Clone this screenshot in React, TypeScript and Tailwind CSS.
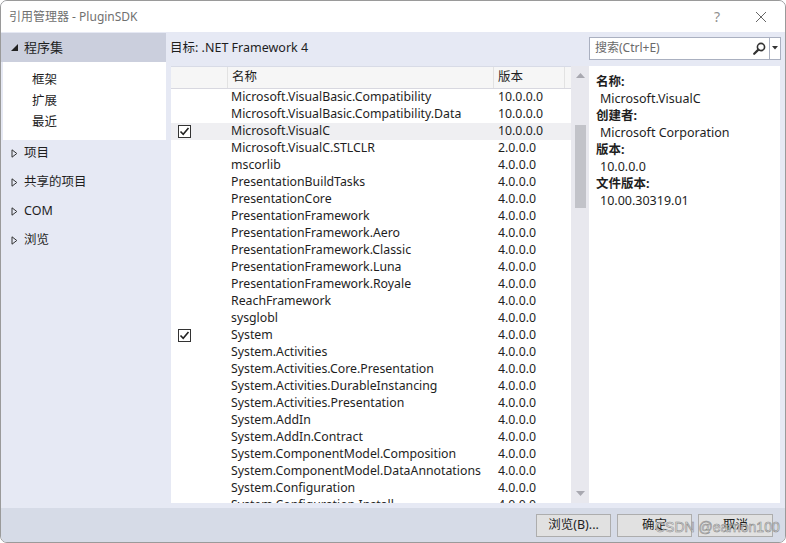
import React from "react";

const rows: [string, string, boolean?][] = [
  ["Microsoft.VisualBasic.Compatibility", "10.0.0.0"],
  ["Microsoft.VisualBasic.Compatibility.Data", "10.0.0.0"],
  ["Microsoft.VisualC", "10.0.0.0", true],
  ["Microsoft.VisualC.STLCLR", "2.0.0.0"],
  ["mscorlib", "4.0.0.0"],
  ["PresentationBuildTasks", "4.0.0.0"],
  ["PresentationCore", "4.0.0.0"],
  ["PresentationFramework", "4.0.0.0"],
  ["PresentationFramework.Aero", "4.0.0.0"],
  ["PresentationFramework.Classic", "4.0.0.0"],
  ["PresentationFramework.Luna", "4.0.0.0"],
  ["PresentationFramework.Royale", "4.0.0.0"],
  ["ReachFramework", "4.0.0.0"],
  ["sysglobl", "4.0.0.0"],
  ["System", "4.0.0.0", true],
  ["System.Activities", "4.0.0.0"],
  ["System.Activities.Core.Presentation", "4.0.0.0"],
  ["System.Activities.DurableInstancing", "4.0.0.0"],
  ["System.Activities.Presentation", "4.0.0.0"],
  ["System.AddIn", "4.0.0.0"],
  ["System.AddIn.Contract", "4.0.0.0"],
  ["System.ComponentModel.Composition", "4.0.0.0"],
  ["System.ComponentModel.DataAnnotations", "4.0.0.0"],
  ["System.Configuration", "4.0.0.0"],
  ["System.Configuration.Install", "4.0.0.0"],
];

function CheckBox() {
  return (
    <div className="w-[13px] h-[13px] border border-[#333] bg-white flex items-center justify-center">
      <svg width="11" height="11" viewBox="0 0 11 11">
        <path d="M1.5 5.5 L4.2 8.3 L9.5 2" fill="none" stroke="#222" strokeWidth="1.6" />
      </svg>
    </div>
  );
}

function Collapsed() {
  return (
    <svg width="7" height="9" viewBox="0 0 7 9" className="shrink-0">
      <path d="M1 0.8 L5.8 4.5 L1 8.2 Z" fill="none" stroke="#333" strokeWidth="1" />
    </svg>
  );
}

export default function App() {
  const font = { fontFamily: '"Noto Sans", "Noto Sans CJK SC", sans-serif' };
  return (
    <div
      className="w-[786px] h-[543px] relative overflow-hidden bg-[#e6e9f4] border border-[#9a9a9a] rounded-t-[7px] rounded-b-[7px] flex flex-col text-[#1e1e1e]"
      style={font}
    >
      {/* title bar */}
      <div className="h-[31px] bg-white flex items-center shrink-0">
        <div className="ml-[8px] text-[12px] text-[#707070] flex-1">引用管理器 - PluginSDK</div>
        <div className="w-[40px] text-center text-[14px] text-[#909090] mr-[6px]">?</div>
        <div className="w-[36px] flex justify-center mr-[6px]">
          <svg width="12" height="12" viewBox="0 0 12 12">
            <path d="M1 1 L11 11 M11 1 L1 11" stroke="#666" strokeWidth="1" />
          </svg>
        </div>
      </div>

      {/* body */}
      <div className="flex h-[476px] shrink-0">
        {/* left panel */}
        <div className="w-[165px] shrink-0 flex flex-col text-[12px]">
          <div className="h-[29px] mt-[1px] bg-[#cbcfdd] flex items-center">
            <svg width="7" height="7" viewBox="0 0 7 7" className="ml-[10px]">
              <path d="M7 0 L7 7 L0 7 Z" fill="#222" />
            </svg>
            <span className="ml-[6px] text-[13px]">程序集</span>
          </div>
          <div className="h-[78px] bg-white ml-[2px] flex flex-col pl-[29px] pt-[7px] text-[12.5px]">
            <div className="h-[21px] leading-[21px]">框架</div>
            <div className="h-[21px] leading-[21px]">扩展</div>
            <div className="h-[21px] leading-[21px]">最近</div>
          </div>
          <div className="flex flex-col text-[12.5px] -mt-[1px]">
            {["项目", "共享的项目", "COM", "浏览"].map((t) => (
              <div key={t} className="h-[29px] flex items-center pl-[10px] gap-[6px]">
                <Collapsed />
                <span>{t}</span>
              </div>
            ))}
          </div>
        </div>

        {/* right */}
        <div className="flex-1 flex flex-col">
          <div className="h-[34px] flex items-center shrink-0">
            <div className="ml-[4px] text-[12.5px] flex-1 pb-[2px]">目标: .NET Framework 4</div>
            <div className="w-[192px] h-[23px] mr-[4px] mb-[2px] border border-[#aab0c0] bg-white flex">
              <div className="flex-1 flex items-center pl-[5px] text-[12px] text-[#6a6a6a]">搜索(Ctrl+E)</div>
              <div className="w-[20px] flex items-center justify-center">
                <svg width="13" height="13" viewBox="0 0 13 13">
                  <circle cx="8" cy="5" r="3.6" fill="none" stroke="#333" strokeWidth="1.6" />
                  <path d="M5.4 7.6 L1.2 11.8" stroke="#333" strokeWidth="2.2" strokeLinecap="round" />
                </svg>
              </div>
              <div className="w-[11px] border-l border-[#aab0c0] flex items-center justify-center">
                <svg width="6" height="4" viewBox="0 0 6 4">
                  <path d="M0 0 L6 0 L3 3.5 Z" fill="#333" />
                </svg>
              </div>
            </div>
          </div>

          <div className="h-[437px] flex shrink-0 ml-[5px] mr-[5px]">
            {/* list */}
            <div className="w-[400px] bg-white flex flex-col overflow-hidden border-t border-[#d8dbe6]">
              <div className="h-[22px] flex bg-[#f6f6f6] border-b border-[#d8d8e0] shrink-0 text-[12.5px]">
                <div className="w-[57px] border-r border-[#e2e2e2]" />
                <div className="w-[266px] border-r border-[#e2e2e2] flex items-center pl-[4px]">名称</div>
                <div className="w-[71px] border-r border-[#e2e2e2] flex items-center pl-[4px]">版本</div>
                <div className="flex-1" />
              </div>
              <div className="flex flex-col text-[12.3px]">
                {rows.map(([n, v, c]) => (
                  <div
                    key={n}
                    className={`h-[17px] flex items-center shrink-0 ${n === "Microsoft.VisualC" ? "bg-[#efeff2]" : ""}`}
                  >
                    <div className="w-[57px] pl-[7px] flex items-center">{c ? <CheckBox /> : null}</div>
                    <div className="w-[266px] pl-[3px] whitespace-nowrap">{n}</div>
                    <div className="w-[71px] pl-[4px]">{v}</div>
                  </div>
                ))}
              </div>
            </div>
            {/* scrollbar */}
            <div className="w-[18px] bg-[#e8e8ee] flex flex-col items-center">
              <svg width="9" height="5" viewBox="0 0 9 5" className="mt-[7px]">
                <path d="M0 5 L9 5 L4.5 0 Z" fill="#a8a8b0" />
              </svg>
              <div className="w-[11px] h-[83px] bg-[#c2c3c9] mt-[47px]" />
              <div className="flex-1" />
              <svg width="9" height="5" viewBox="0 0 9 5" className="mb-[7px]">
                <path d="M0 0 L9 0 L4.5 5 Z" fill="#a8a8b0" />
              </svg>
            </div>
            {/* details */}
            <div className="flex-1 bg-white pl-[7px] pt-[7px] flex flex-col text-[12.5px] leading-[17px]">
              <div className="font-bold">名称:</div>
              <div className="pl-[4px]">Microsoft.VisualC</div>
              <div className="font-bold">创建者:</div>
              <div className="pl-[4px]">Microsoft Corporation</div>
              <div className="font-bold">版本:</div>
              <div className="pl-[4px]">10.0.0.0</div>
              <div className="font-bold">文件版本:</div>
              <div className="pl-[4px]">10.00.30319.01</div>
            </div>
          </div>
        </div>
      </div>

      {/* footer */}
      <div className="flex-1 bg-[#d6dbe7] flex items-start justify-end pt-[6px] pr-[12px] gap-[6px] text-[12.5px]">
        <div className="w-[75px] h-[23px] bg-[#e1e1e1] border border-[#adadad] flex items-center justify-center">浏览(B)...</div>
        <div className="w-[75px] h-[23px] bg-[#e1e1e1] border border-[#adadad] flex items-center justify-center">确定</div>
        <div className="w-[75px] h-[23px] bg-[#e1e1e1] border border-[#adadad] flex items-center justify-center">取消</div>
      </div>

      {/* watermark */}
      <div
        className="absolute left-[654px] top-[516px] text-[14px] text-[#ffffff]/70 pointer-events-none"
        style={{ fontFamily: '"Liberation Sans", sans-serif', WebkitTextStroke: "0.6px #8a8a8a" }}
      >
        CSDN @earnon100
      </div>
    </div>
  );
}
